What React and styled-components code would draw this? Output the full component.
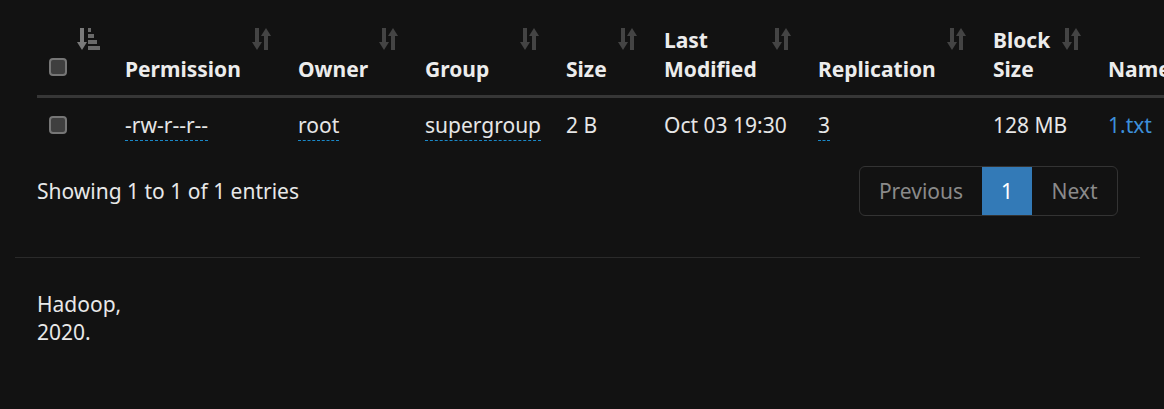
import React from "react";
import styled, { createGlobalStyle } from "styled-components";

const GlobalStyle = createGlobalStyle`
  html, body {
    margin: 0;
    padding: 0;
    background: #121212;
    overflow: hidden;
  }
  body {
    font-family: "Noto Sans", "Open Sans", sans-serif;
    font-size: 21px;
    color: #e4e4e4;
  }
`;

const Page = styled.div`
  margin-left: 15px;
  width: 1125px;
`;

const Section = styled.div`
  padding: 15px 22px 0 22px;
`;

const TableWrap = styled.div`
  width: 1081px;
  overflow: visible;
`;

const Table = styled.table`
  border-collapse: collapse;
  table-layout: fixed;
  width: 1200px;
`;

const Th = styled.th`
  position: relative;
  text-align: left;
  vertical-align: bottom;
  font-weight: 700;
  color: #ececec;
  line-height: 29px;
  padding: 11px 12px 11px 12px;
  border-bottom: 3px solid #363636;
  white-space: nowrap;
`;

const Td = styled.td`
  text-align: left;
  vertical-align: middle;
  line-height: 29px;
  padding: 13px 12px 12px 12px;
  white-space: nowrap;
  color: #e6e6e6;
`;

const SortSlot = styled.span`
  position: absolute;
  top: 13px;
  right: 12px;
  display: flex;
  color: ${(p) => (p.$active ? "#6f6f6f" : "#444")};
`;

const Check = styled.span`
  display: inline-block;
  width: 14px;
  height: 14px;
  border: 2px solid #767676;
  border-radius: 4px;
  background: #3f3f3f;
  vertical-align: middle;
  position: relative;
  top: ${(p) => (p.$head ? "-4px" : "-2px")};
`;

const Editable = styled.span`
  border-bottom: 1px dashed #1a88c8;
  padding-bottom: 1px;
`;

const NameLink = styled.a`
  color: #3d8fd9;
  text-decoration: none;
`;

const InfoRow = styled.div`
  display: flex;
  justify-content: space-between;
  align-items: center;
  margin-top: 14px;
`;

const Info = styled.div`
  color: #e8e8e8;
`;

const Pager = styled.div`
  display: flex;
  border: 1px solid #333;
  border-radius: 6px;
  overflow: hidden;
  height: 48px;
`;

const PageBtn = styled.span`
  display: flex;
  align-items: center;
  justify-content: center;
  width: ${(p) => p.$w}px;
  color: ${(p) => (p.$active ? "#fff" : "#8a8a8a")};
  background: ${(p) => (p.$active ? "#337ab7" : "transparent")};
`;

const Rule = styled.hr`
  border: 0;
  border-top: 1px solid #2a2a2a;
  margin: 41px 0 0 0;
`;

const Footer = styled.footer`
  padding: 32px 22px;
  line-height: 28px;
  color: #e8e8e8;
`;

const SortIcon = () => (
  <svg width="22" height="22" viewBox="0 0 22 22" fill="currentColor">
    <path d="M3 0h4v14h3l-5 8-5-8h3z" />
    <path d="M15 22h-4V8H8l5-8 5 8h-3z" transform="translate(1 0)" />
  </svg>
);

const SortDescIcon = () => (
  <svg width="24" height="22" viewBox="0 0 24 22">
    <path d="M3 0h4v14h3l-5 8-5-8h3z" fill="#7a7a7a" />
    <g fill="#6a6a6a">
      <rect x="11" y="0" width="3" height="4" />
      <rect x="11" y="6" width="6" height="4" />
      <rect x="11" y="12" width="9" height="4" />
      <rect x="11" y="18" width="12" height="4" />
    </g>
  </svg>
);

const columns = [
  { w: 76, label: null, desc: true },
  { w: 173, label: "Permission" },
  { w: 127, label: "Owner" },
  { w: 141, label: "Group" },
  { w: 98, label: "Size" },
  { w: 154, label: ["Last", "Modified"] },
  { w: 175, label: "Replication" },
  { w: 115, label: ["Block", "Size"] },
  { w: 141, label: "Name" },
];

const HeadLabel = ({ label }) => {
  if (label === null) return <Check $head />;
  if (Array.isArray(label))
    return (
      <>
        {label[0]}
        <br />
        {label[1]}
      </>
    );
  return label;
};

export default function App() {
  return (
    <>
      <GlobalStyle />
      <Page>
        <Section>
          <TableWrap>
            <Table>
              <colgroup>
                {columns.map((c, i) => (
                  <col key={i} style={{ width: c.w }} />
                ))}
              </colgroup>
              <thead>
                <tr>
                  {columns.map((c, i) => (
                    <Th key={i}>
                      {i < columns.length - 1 && (
                        <SortSlot $active={c.desc}>
                          {c.desc ? <SortDescIcon /> : <SortIcon />}
                        </SortSlot>
                      )}
                      {!Array.isArray(c.label) && c.label !== null && <br />}
                      <HeadLabel label={c.label} />
                    </Th>
                  ))}
                </tr>
              </thead>
              <tbody>
                <tr>
                  <Td>
                    <Check />
                  </Td>
                  <Td>
                    <Editable>-rw-r--r--</Editable>
                  </Td>
                  <Td>
                    <Editable>root</Editable>
                  </Td>
                  <Td>
                    <Editable>supergroup</Editable>
                  </Td>
                  <Td>2 B</Td>
                  <Td>Oct 03 19:30</Td>
                  <Td>
                    <Editable>3</Editable>
                  </Td>
                  <Td>128 MB</Td>
                  <Td>
                    <NameLink href="#">1.txt</NameLink>
                  </Td>
                </tr>
              </tbody>
            </Table>
          </TableWrap>
          <InfoRow>
            <Info>Showing 1 to 1 of 1 entries</Info>
            <Pager>
              <PageBtn $w={122}>Previous</PageBtn>
              <PageBtn $w={50} $active>
                1
              </PageBtn>
              <PageBtn $w={85}>Next</PageBtn>
            </Pager>
          </InfoRow>
        </Section>
        <Rule />
        <Footer>
          Hadoop,
          <br />
          2020.
        </Footer>
      </Page>
    </>
  );
}
